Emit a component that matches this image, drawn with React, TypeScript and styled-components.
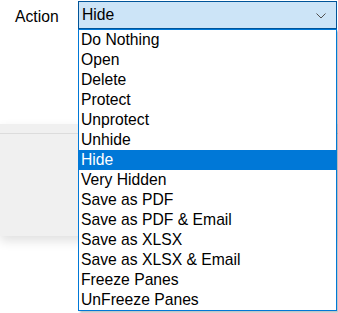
import React from "react";
import styled, { createGlobalStyle } from "styled-components";

const GlobalStyle = createGlobalStyle`
	html, body {
		margin: 0;
		padding: 0;
		background: #ffffff;
	}
	body {
		width: 338px;
		height: 313px;
		overflow: hidden;
		font-family: "Liberation Sans", Arial, sans-serif;
		font-size: 15.7px;
		color: #000000;
	}
`;

const options = [
	"Do Nothing",
	"Open",
	"Delete",
	"Protect",
	"Unprotect",
	"Unhide",
	"Hide",
	"Very Hidden",
	"Save as PDF",
	"Save as PDF & Email",
	"Save as XLSX",
	"Save as XLSX & Email",
	"Freeze Panes",
	"UnFreeze Panes"
];

const Page = styled.div`
	position: relative;
	width: 338px;
	height: 313px;
`;

const FieldRow = styled.div`
	display: flex;
	align-items: flex-start;
	padding-top: 1px;
`;

const Label = styled.label`
	width: 78px;
	box-sizing: border-box;
	padding-left: 15px;
	line-height: 31px;
`;

const Combo = styled.div`
	position: relative;
	width: 259px;
`;

const SelectBox = styled.div`
	box-sizing: border-box;
	height: 28px;
	display: flex;
	align-items: center;
	justify-content: space-between;
	padding: 0 10px 0 3px;
	background: #cce4f7;
	border: 1px solid #005499;
`;

const Chevron = styled.svg`
	width: 10px;
	height: 6px;
	margin-top: 1px;
`;

const List = styled.ul`
	position: absolute;
	top: 28px;
	left: 0;
	right: 0;
	margin: 0;
	padding: 0;
	list-style: none;
	background: #ffffff;
	border: 1px solid #0078d7;
	box-shadow: 2px 2px 2px rgba(0, 0, 0, 0.25);
	z-index: 2;
`;

const Item = styled.li<{ $selected?: boolean }>`
	height: 20px;
	line-height: 20px;
	padding-left: 2px;
	white-space: nowrap;
	background: ${(p) => (p.$selected ? "#0078d7" : "transparent")};
	color: ${(p) => (p.$selected ? "#ffffff" : "#000000")};
`;

const Panel = styled.div`
	margin-top: 92px;
	height: 112px;
	background: #f0f0f0;
	box-shadow: 0 5px 10px rgba(0, 0, 0, 0.12);
`;

const PanelHeader = styled.div`
	height: 9px;
	border-bottom: 1px solid #dcdcdc;
`;

export default function App() {
	const value = "Hide";

	return (
		<Page>
			<GlobalStyle />
			<FieldRow>
				<Label>Action</Label>
				<Combo>
					<SelectBox>
						<span>{value}</span>
						<Chevron viewBox="0 0 10 6">
							<path d="M0.5 0.5 L5 5 L9.5 0.5" fill="none" stroke="#505050" strokeWidth="1" />
						</Chevron>
					</SelectBox>
					<List>
						{options.map((o) => (
							<Item key={o} $selected={o === value}>
								{o}
							</Item>
						))}
					</List>
				</Combo>
			</FieldRow>
			<Panel>
				<PanelHeader />
			</Panel>
		</Page>
	);
}
